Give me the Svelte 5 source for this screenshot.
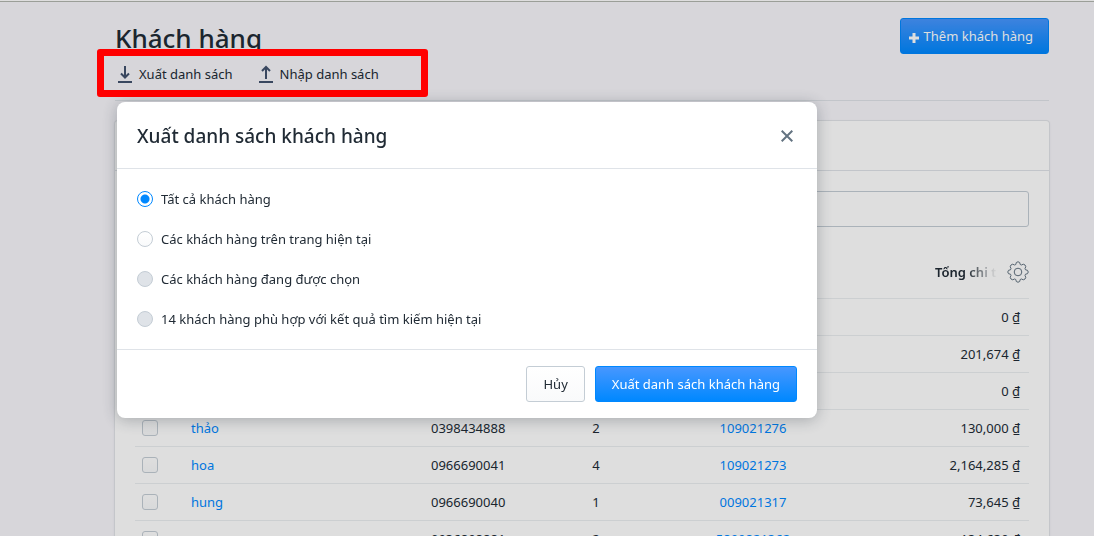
<script lang="ts">
	interface Customer {
		name: string;
		phone: string;
		orders: string;
		lastOrder: string;
		total: string;
	}

	const customers: Customer[] = [
		{ name: '', phone: '', orders: '', lastOrder: '', total: '0 ₫' },
		{ name: '', phone: '', orders: '', lastOrder: '', total: '201,674 ₫' },
		{ name: '', phone: '', orders: '', lastOrder: '', total: '0 ₫' },
		{ name: 'thảo', phone: '0398434888', orders: '2', lastOrder: '109021276', total: '130,000 ₫' },
		{ name: 'hoa', phone: '0966690041', orders: '4', lastOrder: '109021273', total: '2,164,285 ₫' },
		{ name: 'hung', phone: '0966690040', orders: '1', lastOrder: '009021317', total: '73,645 ₫' },
		{ name: '', phone: '0936898881', orders: '2', lastOrder: '5899821362', total: '134,630 ₫' }
	];

	const options = [
		{ value: 'all', label: 'Tất cả khách hàng', disabled: false },
		{ value: 'page', label: 'Các khách hàng trên trang hiện tại', disabled: false },
		{ value: 'selected', label: 'Các khách hàng đang được chọn', disabled: true },
		{ value: 'search', label: '14 khách hàng phù hợp với kết quả tìm kiếm hiện tại', disabled: true }
	];

	let scope = $state('all');
	let open = $state(true);
	let query = $state('');

	function close() {
		open = false;
	}
</script>

<div class="page">
	<header class="page-header">
		<div>
			<h1>Khách hàng</h1>
			<div class="actions">
				<button class="action" onclick={() => (open = true)}>
					<svg width="14" height="18" viewBox="0 0 14 18" aria-hidden="true">
						<path d="M7 1v11.500M3 8.500l4 4 4-4M0 17h14" />
					</svg>
					Xuất danh sách
				</button>
				<button class="action">
					<svg width="14" height="18" viewBox="0 0 14 18" aria-hidden="true">
						<path d="M7 14V2M3 6l4-4 4 4M0 17h14" />
					</svg>
					Nhập danh sách
				</button>
			</div>
		</div>
		<button class="btn btn-primary btn-add">
			<svg width="10" height="10" viewBox="0 0 10 10" aria-hidden="true">
				<path d="M5 0v10M0 5h10" />
			</svg>
			Thêm khách hàng
		</button>
	</header>

	<section class="card">
		<div class="tabs"></div>
		<div class="card-body">
			<input class="search" type="text" aria-label="Khách hàng" bind:value={query} />
			<table>
				<thead>
					<tr>
						<th class="col-check"></th>
						<th class="col-name"></th>
						<th class="col-phone"></th>
						<th class="col-orders"></th>
						<th class="col-last"></th>
						<th class="col-total">
							<div class="total-head">
								<span class="fade">Tổng chi tiêu</span>
								<button class="gear" aria-label="Tổng chi tiêu">
									<svg width="22" height="22" viewBox="0 0 22 22" aria-hidden="true">
										<path
											d="M9.300 1.500Q11 0 12.700 1.500L13.200 3.500 14.400 4 16.300 3.200Q18.500 3.500 18.800 5.700L18 7.600 18.500 8.800 20.500 9.300Q22 11 20.500 12.700L18.500 13.200 18 14.400 18.800 16.300Q18.500 18.500 16.300 18.800L14.400 18 13.200 18.500 12.700 20.500Q11 22 9.300 20.500L8.800 18.500 7.600 18 5.700 18.800Q3.500 18.500 3.200 16.300L4 14.400 3.500 13.200 1.500 12.700Q0 11 1.500 9.300L3.500 8.800 4 7.600 3.200 5.700Q3.500 3.500 5.700 3.200L7.600 4 8.800 3.500Z"
										/>
										<circle cx="11" cy="11" r="3.800" />
									</svg>
								</button>
							</div>
						</th>
					</tr>
				</thead>
				<tbody>
					{#each customers as customer}
						<tr>
							<td><input class="check" type="checkbox" aria-label={customer.name} /></td>
							<td>
								{#if customer.name}<a href="#customer">{customer.name}</a>{/if}
							</td>
							<td>{customer.phone}</td>
							<td class="center">{customer.orders}</td>
							<td class="center">
								{#if customer.lastOrder}<a href="#order">{customer.lastOrder}</a>{/if}
							</td>
							<td class="total">{customer.total}</td>
						</tr>
					{/each}
				</tbody>
			</table>
		</div>
	</section>
</div>

{#if open}
	<div class="backdrop">
		<div class="modal" role="dialog" aria-modal="true" aria-labelledby="modal-title">
			<div class="modal-header">
				<h2 id="modal-title">Xuất danh sách khách hàng</h2>
				<button class="close" aria-label="Hủy" onclick={close}>
					<svg width="12" height="12" viewBox="0 0 12 12" aria-hidden="true">
						<path d="M0.700 0.700l10.600 10.600M11.300 0.700L0.700 11.300" />
					</svg>
				</button>
			</div>
			<div class="modal-body">
				{#each options as option}
					<label>
						<input
							type="radio"
							name="scope"
							value={option.value}
							disabled={option.disabled}
							bind:group={scope}
						/>
						{option.label}
					</label>
				{/each}
			</div>
			<div class="modal-footer">
				<button class="btn" onclick={close}>Hủy</button>
				<button class="btn btn-primary">Xuất danh sách khách hàng</button>
			</div>
		</div>
	</div>
{/if}
<div class="highlight"></div>

<style>
	:global(body) {
		background: #f7f6fb;
		color: #212b35;
		font: 13px/20px 'Segoe UI', 'Noto Sans', sans-serif;
	}

	button,
	input {
		box-sizing: border-box;
		margin: 0;
		font: inherit;
		color: inherit;
	}

	button {
		padding: 0;
		border: none;
		background: none;
		cursor: pointer;
	}

	svg {
		flex: none;
		fill: none;
		stroke: currentColor;
	}

	a {
		color: #08f;
		text-decoration: none;
	}

	.page {
		box-sizing: border-box;
		height: 100vh;
		overflow: hidden;
		padding: 1px 45px 0 115px;
		border-top: 1px solid #fff;
		box-shadow: inset 0 1px #b2b7af;
	}

	.page-header {
		display: flex;
		justify-content: space-between;
		align-items: flex-start;
		box-sizing: border-box;
		min-height: 99px;
		padding-top: 16px;
		border-bottom: 1px solid #dfe3e8;
	}

	h1 {
		margin: 0;
		font-size: 26px;
		line-height: 40px;
		font-weight: 500;
	}

	.actions {
		display: flex;
		gap: 26px;
		padding: 6px 3px;
	}

	.action {
		display: flex;
		align-items: center;
		gap: 7px;
	}

	.action svg {
		color: #42526e;
		stroke-width: 2;
	}

	.btn {
		height: 36px;
		padding: 0 16px;
		border: 1px solid #c4cdd5;
		border-radius: 3px;
		background: linear-gradient(#fff, #f9fafb);
	}

	.btn-primary {
		border-color: #08f;
		background: linear-gradient(#4797ff, #08f);
		color: #fff;
	}

	.btn-add {
		display: flex;
		align-items: center;
		gap: 5px;
		padding: 0 15px 0 8px;
	}

	.btn-add svg {
		margin-top: 3px;
		stroke-width: 3;
	}

	.card {
		margin-top: 20px;
		border-radius: 3px;
		background: #fff;
		box-shadow: 0 0 0 1px #e2e4e8, 0 1px 3px rgba(63, 63, 68, 0.15);
	}

	.tabs {
		height: 49px;
		border-bottom: 1px solid #dfe3e8;
	}

	.card-body {
		padding: 20px;
	}

	.search {
		display: block;
		width: 100%;
		height: 36px;
		padding: 0 12px;
		border: 1px solid #c4cdd5;
		border-radius: 3px;
		background: #fff;
	}

	table {
		width: 100%;
		margin-top: 18px;
		border-collapse: collapse;
		table-layout: fixed;
	}

	th {
		height: 53px;
		padding: 0;
		font-weight: 600;
	}

	td {
		height: 36px;
		padding: 0;
		border-top: 1px solid #ebeef0;
	}

	.col-check {
		width: 56px;
	}

	.col-name {
		width: 240px;
	}

	.col-phone {
		width: 120px;
	}

	.col-orders {
		width: 90px;
	}

	.col-last {
		width: 224px;
	}

	.total-head {
		display: flex;
		justify-content: flex-end;
		align-items: center;
		gap: 10px;
	}

	.fade {
		width: 62px;
		overflow: hidden;
		white-space: nowrap;
		text-align: left;
		mask-image: linear-gradient(to right, #000 50%, transparent);
	}

	.gear {
		display: flex;
		color: #637381;
	}

	.check {
		display: block;
		width: 16px;
		height: 16px;
		margin-left: 7px;
		border: 1px solid #c4cdd5;
		border-radius: 3px;
		background: linear-gradient(#fff, #f9fafb);
		appearance: none;
	}

	.center {
		text-align: center;
	}

	.total {
		padding-right: 9px;
		text-align: right;
	}

	.backdrop {
		position: fixed;
		inset: 0;
		padding: 102px 117px;
		background: rgba(0, 0, 0, 0.13);
	}

	.modal {
		max-width: 700px;
		border-radius: 8px;
		background: #fff;
		box-shadow: 0 2px 16px rgba(33, 43, 54, 0.3);
	}

	.modal-header {
		display: flex;
		justify-content: space-between;
		align-items: center;
		padding: 20px 24px 18px 20px;
		border-bottom: 1px solid #dfe3e8;
	}

	h2 {
		margin: 0;
		font-size: 19px;
		line-height: 28px;
		font-weight: 500;
	}

	.close {
		display: flex;
		color: #637381;
	}

	.close svg {
		stroke-width: 2;
	}

	.modal-body {
		display: flex;
		flex-direction: column;
		gap: 20px;
		padding: 20px;
	}

	label {
		display: flex;
		align-items: center;
		gap: 8px;
	}

	.modal-body input {
		width: 16px;
		height: 16px;
		border: 1px solid #c4cdd5;
		border-radius: 50%;
		background: linear-gradient(#fff, #f9fafb);
		appearance: none;
	}

	.modal-body input:checked {
		border-color: #08f;
		background: radial-gradient(circle, #08f 4px, #fff 5px);
	}

	.modal-body input:disabled {
		background: #dfe3e8;
	}

	.modal-footer {
		display: flex;
		justify-content: flex-end;
		gap: 10px;
		padding: 16px 20px;
		border-top: 1px solid #dfe3e8;
	}

	/* frame drawn over the export and import buttons */
	.highlight {
		position: fixed;
		top: 49px;
		left: 97px;
		box-sizing: border-box;
		width: 331px;
		height: 48px;
		border: 7px solid #f00;
		border-radius: 3px;
		pointer-events: none;
	}
</style>
